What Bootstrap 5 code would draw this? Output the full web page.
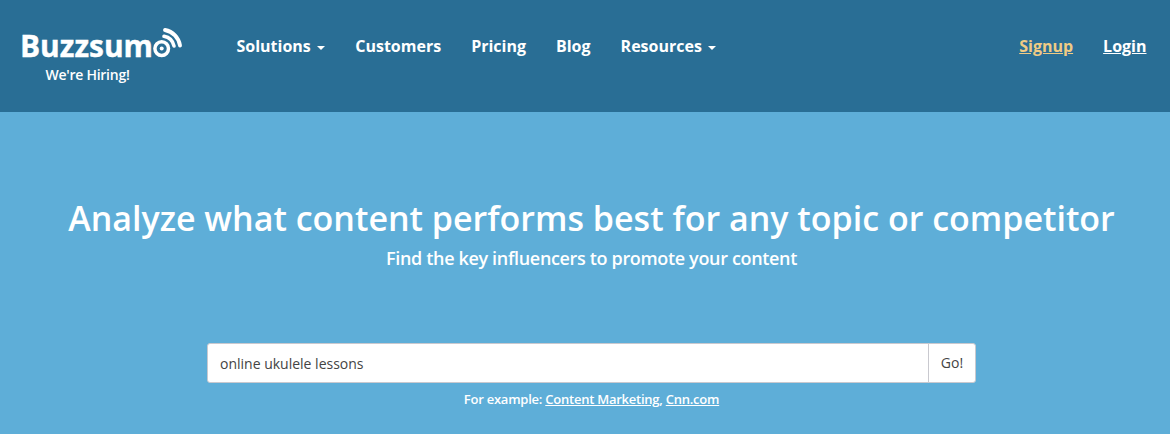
<!DOCTYPE html>
<html lang="en">
<head>
<meta charset="utf-8">
<meta name="viewport" content="width=device-width, initial-scale=1">
<title>Buzzsumo</title>
<link rel="stylesheet" href="https://cdn.jsdelivr.net/npm/bootstrap@5.3.0/dist/css/bootstrap.min.css">
<style>
body{background:#5eaed8;font-family:"Open Sans","Noto Sans",sans-serif;color:#fff;overflow:hidden}
.topbar{background:#296e95;height:112px;padding:22px 23.5px 0 20px}
.brand-block{width:164px}
.brand-block svg{display:block}
.hiring{font-size:14px;font-weight:600;line-height:20px;letter-spacing:-.25px;width:135px;margin-top:1px}
.main-links{margin-left:52.5px;gap:30px;padding-top:13px}
.main-links,.account-links{font-size:16px;font-weight:700;line-height:22px}
.account-links{gap:30px;padding-top:13px}
.main-links .nav-link{padding:0;color:#fff;white-space:nowrap}
.main-links .dropdown-toggle::after{border-width:4px 4px 0;margin-left:6.4px;vertical-align:2px}
.account-links a{color:#fff}
.account-links a.signup{color:#efcb84}
.hero{padding:82px 0 0 13px}
.hero h1{font-size:34px;font-weight:600;line-height:48px;margin:0;white-space:nowrap}
.tagline{font-size:18px;font-weight:600;line-height:26px;letter-spacing:-.34px;margin:3px 0 0}
.search-box{width:769px;height:40px;margin:72px auto 0}
.search-box .form-control,.search-box .btn{font-size:14px;border-color:#c9c9cf;background:#fff;color:#444;border-radius:3px}
.search-box .btn{width:48px;padding:0 0 2px}
.examples{font-size:13px;font-weight:600;line-height:18px;letter-spacing:-.24px;margin:7px 0 0}
.examples a{color:#fff}
</style>
</head>
<body>
<header class="topbar d-flex align-items-start">
  <div class="brand-block">
    <svg width="164" height="42" viewBox="20 22 164 42" role="img" aria-label="Buzzsumo">
      <text x="20" y="56.5" font-family="Open Sans" font-weight="700" font-size="30" fill="#fff" stroke="#fff" stroke-width=".4" textLength="133" lengthAdjust="spacingAndGlyphs">Buzzsum</text>
      <g fill="none" stroke="#fff">
        <circle cx="161.7" cy="48.6" r="6.8" stroke-width="3.5"/>
        <path d="M164 36.3A12.5 12.5 0 0 1 174 46" stroke-width="3.6" stroke-linecap="round"/>
        <path d="M165 30A18.5 18.5 0 0 1 180 45.5" stroke-width="3.9" stroke-linecap="round"/>
      </g>
      <circle cx="161.7" cy="48.6" r="2" fill="#fff"/>
    </svg>
    <div class="hiring text-center">We're Hiring!</div>
  </div>
  <nav class="main-links nav flex-nowrap">
    <a class="nav-link dropdown-toggle" href="#">Solutions</a>
    <a class="nav-link" href="#">Customers</a>
    <a class="nav-link" href="#">Pricing</a>
    <a class="nav-link" href="#">Blog</a>
    <a class="nav-link dropdown-toggle" href="#">Resources</a>
  </nav>
  <div class="account-links d-flex ms-auto"><a class="signup" href="#">Signup</a><a href="#">Login</a></div>
</header>
<main class="hero text-center">
  <h1>Analyze what content performs best for any topic or competitor</h1>
  <p class="tagline">Find the key influencers to promote your content</p>
  <form class="search-box input-group">
    <input class="form-control" type="text" value="online ukulele lessons" aria-label="Topic">
    <button class="btn" type="button">Go!</button>
  </form>
  <p class="examples">For example: <a href="#">Content Marketing</a>, <a href="#">Cnn.com</a></p>
</main>
<script src="https://cdn.jsdelivr.net/npm/bootstrap@5.3.0/dist/js/bootstrap.bundle.min.js"></script>
</body>
</html>
